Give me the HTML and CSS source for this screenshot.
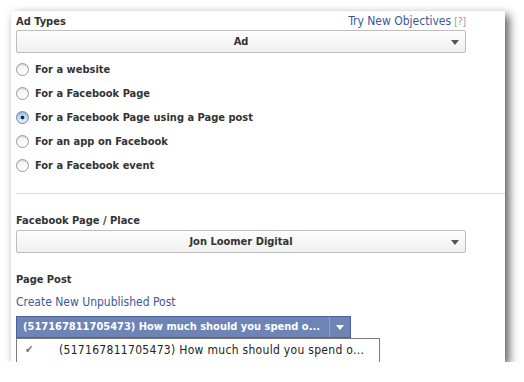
FILE: index.html
```html
<!DOCTYPE html>
<html lang="en">
  <head>
    <meta charset="UTF-8" />
    <title>Ad Types</title>
    <link rel="stylesheet" href="styles.css">
  </head>
  <body>
    <div class="panel">
      <div class="section">
        <div class="label-row">
          <span class="label">Ad Types</span>
          <span class="help"><a class="link" href="#">Try New Objectives</a> <span class="q">[?]</span></span>
        </div>
        <div class="select">
          <span class="select-text">Ad</span>
          <span class="arrow"></span>
        </div>
        <ul class="radios">
          <li><span class="radio"></span>For a website</li>
          <li><span class="radio"></span>For a Facebook Page</li>
          <li><span class="radio checked"></span>For a Facebook Page using a Page post</li>
          <li><span class="radio"></span>For an app on Facebook</li>
          <li><span class="radio"></span>For a Facebook event</li>
        </ul>
      </div>
      <hr class="sep" />
      <div class="section second">
        <div class="label">Facebook Page / Place</div>
        <div class="select">
          <span class="select-text">Jon Loomer Digital</span>
          <span class="arrow"></span>
        </div>
        <div class="label post-label">Page Post</div>
        <a class="link create" href="#">Create New Unpublished Post</a>
        <div class="post-picker">
          <div class="blue-select">
            <span class="blue-text">(517167811705473) How much should you spend o...</span>
            <span class="blue-arrow"><span class="arrow white"></span></span>
          </div>
          <div class="menu">
            <span class="check">&#10004;</span>
            <span class="menu-text">(517167811705473) How much should you spend o...</span>
          </div>
        </div>
      </div>
    </div>
  </body>
</html>
```

FILE: styles.css
```css
* {
  margin: 0;
  padding: 0;
  box-sizing: border-box;
}

body {
  font-family: "DejaVu Sans Condensed", "DejaVu Sans", sans-serif;
  font-size: 11px;
  color: #333;
  background-color: #fff;
}

/* Panel */
.panel {
  margin: 11px 0 0 11px;
  width: 494px;
  height: 351px;
  background-color: #fff;
  box-shadow: 4px 4px 9px rgba(0, 0, 0, 0.65);
  overflow: hidden;
}

.section {
  padding: 0 39px 0 5px;
}

.label-row {
  display: flex;
  justify-content: space-between;
  align-items: baseline;
  padding-top: 3px;
  height: 19px;
}

.label {
  font-weight: bold;
  color: #333;
}

.link {
  color: #3b5998;
  text-decoration: none;
  font-size: 12px;
}

.q {
  color: #999;
  font-size: 10px;
}

/* Select */
.select {
  position: relative;
  height: 23px;
  border: 1px solid #bdbdbd;
  border-radius: 2px;
  background: linear-gradient(#fdfdfd, #f0f0f0);
  text-align: center;
  line-height: 21px;
  font-weight: bold;
  color: #333;
}

.arrow {
  position: absolute;
  right: 6px;
  top: 9px;
  width: 0;
  height: 0;
  border-left: 4px solid transparent;
  border-right: 4px solid transparent;
  border-top: 5px solid #555;
}

/* Radios */
.radios {
  list-style: none;
  padding-top: 4px;
}

.radios li {
  display: flex;
  align-items: center;
  height: 24px;
  font-weight: bold;
}

.radio {
  width: 13px;
  height: 13px;
  margin-right: 6px;
  border: 1px solid #9a9a9a;
  border-radius: 50%;
  background: linear-gradient(#f2f2f2, #fff);
  box-shadow: inset 0 1px 1px rgba(0, 0, 0, 0.15);
}

.radio.checked {
  border-color: #6a86b8;
  background: radial-gradient(circle, #1d2a44 0, #1d2a44 1.6px, transparent 2.2px),
    linear-gradient(#a9c6ee, #e2eefc);
}

.sep {
  border: 0;
  border-top: 1px solid #ddd;
  margin: 16px 0 0 5px;
}

.second {
  padding-top: 20px;
}

.second .select {
  margin-top: 3px;
}

.post-label {
  margin-top: 20px;
}

.create {
  display: block;
  margin-top: 9px;
}

/* Page post picker */
.post-picker {
  position: relative;
  margin-top: 7px;
}

.blue-select {
  display: flex;
  width: 335px;
  height: 22px;
  border: 1px solid #4a62a0;
  background-color: #6d84b4;
  color: #fff;
  font-weight: bold;
  line-height: 20px;
}

.blue-text {
  flex: 1;
  padding-left: 6px;
  white-space: nowrap;
  overflow: hidden;
}

.blue-arrow {
  position: relative;
  width: 21px;
  border-left: 1px solid #8fa2cc;
}

.arrow.white {
  right: 6px;
  top: 8px;
  border-top-color: #fff;
}

.menu {
  position: absolute;
  top: 22px;
  left: 0;
  width: 364px;
  height: 40px;
  border: 1px solid #7a7a7a;
  background-color: #fff;
  display: flex;
  padding-top: 3px;
}

.check {
  width: 42px;
  padding-left: 8px;
  color: #777;
  font-size: 11px;
  line-height: 16px;
}

.menu-text {
  font-size: 12px;
  line-height: 16px;
  color: #222;
  letter-spacing: 0.3px;
  white-space: nowrap;
}
```
